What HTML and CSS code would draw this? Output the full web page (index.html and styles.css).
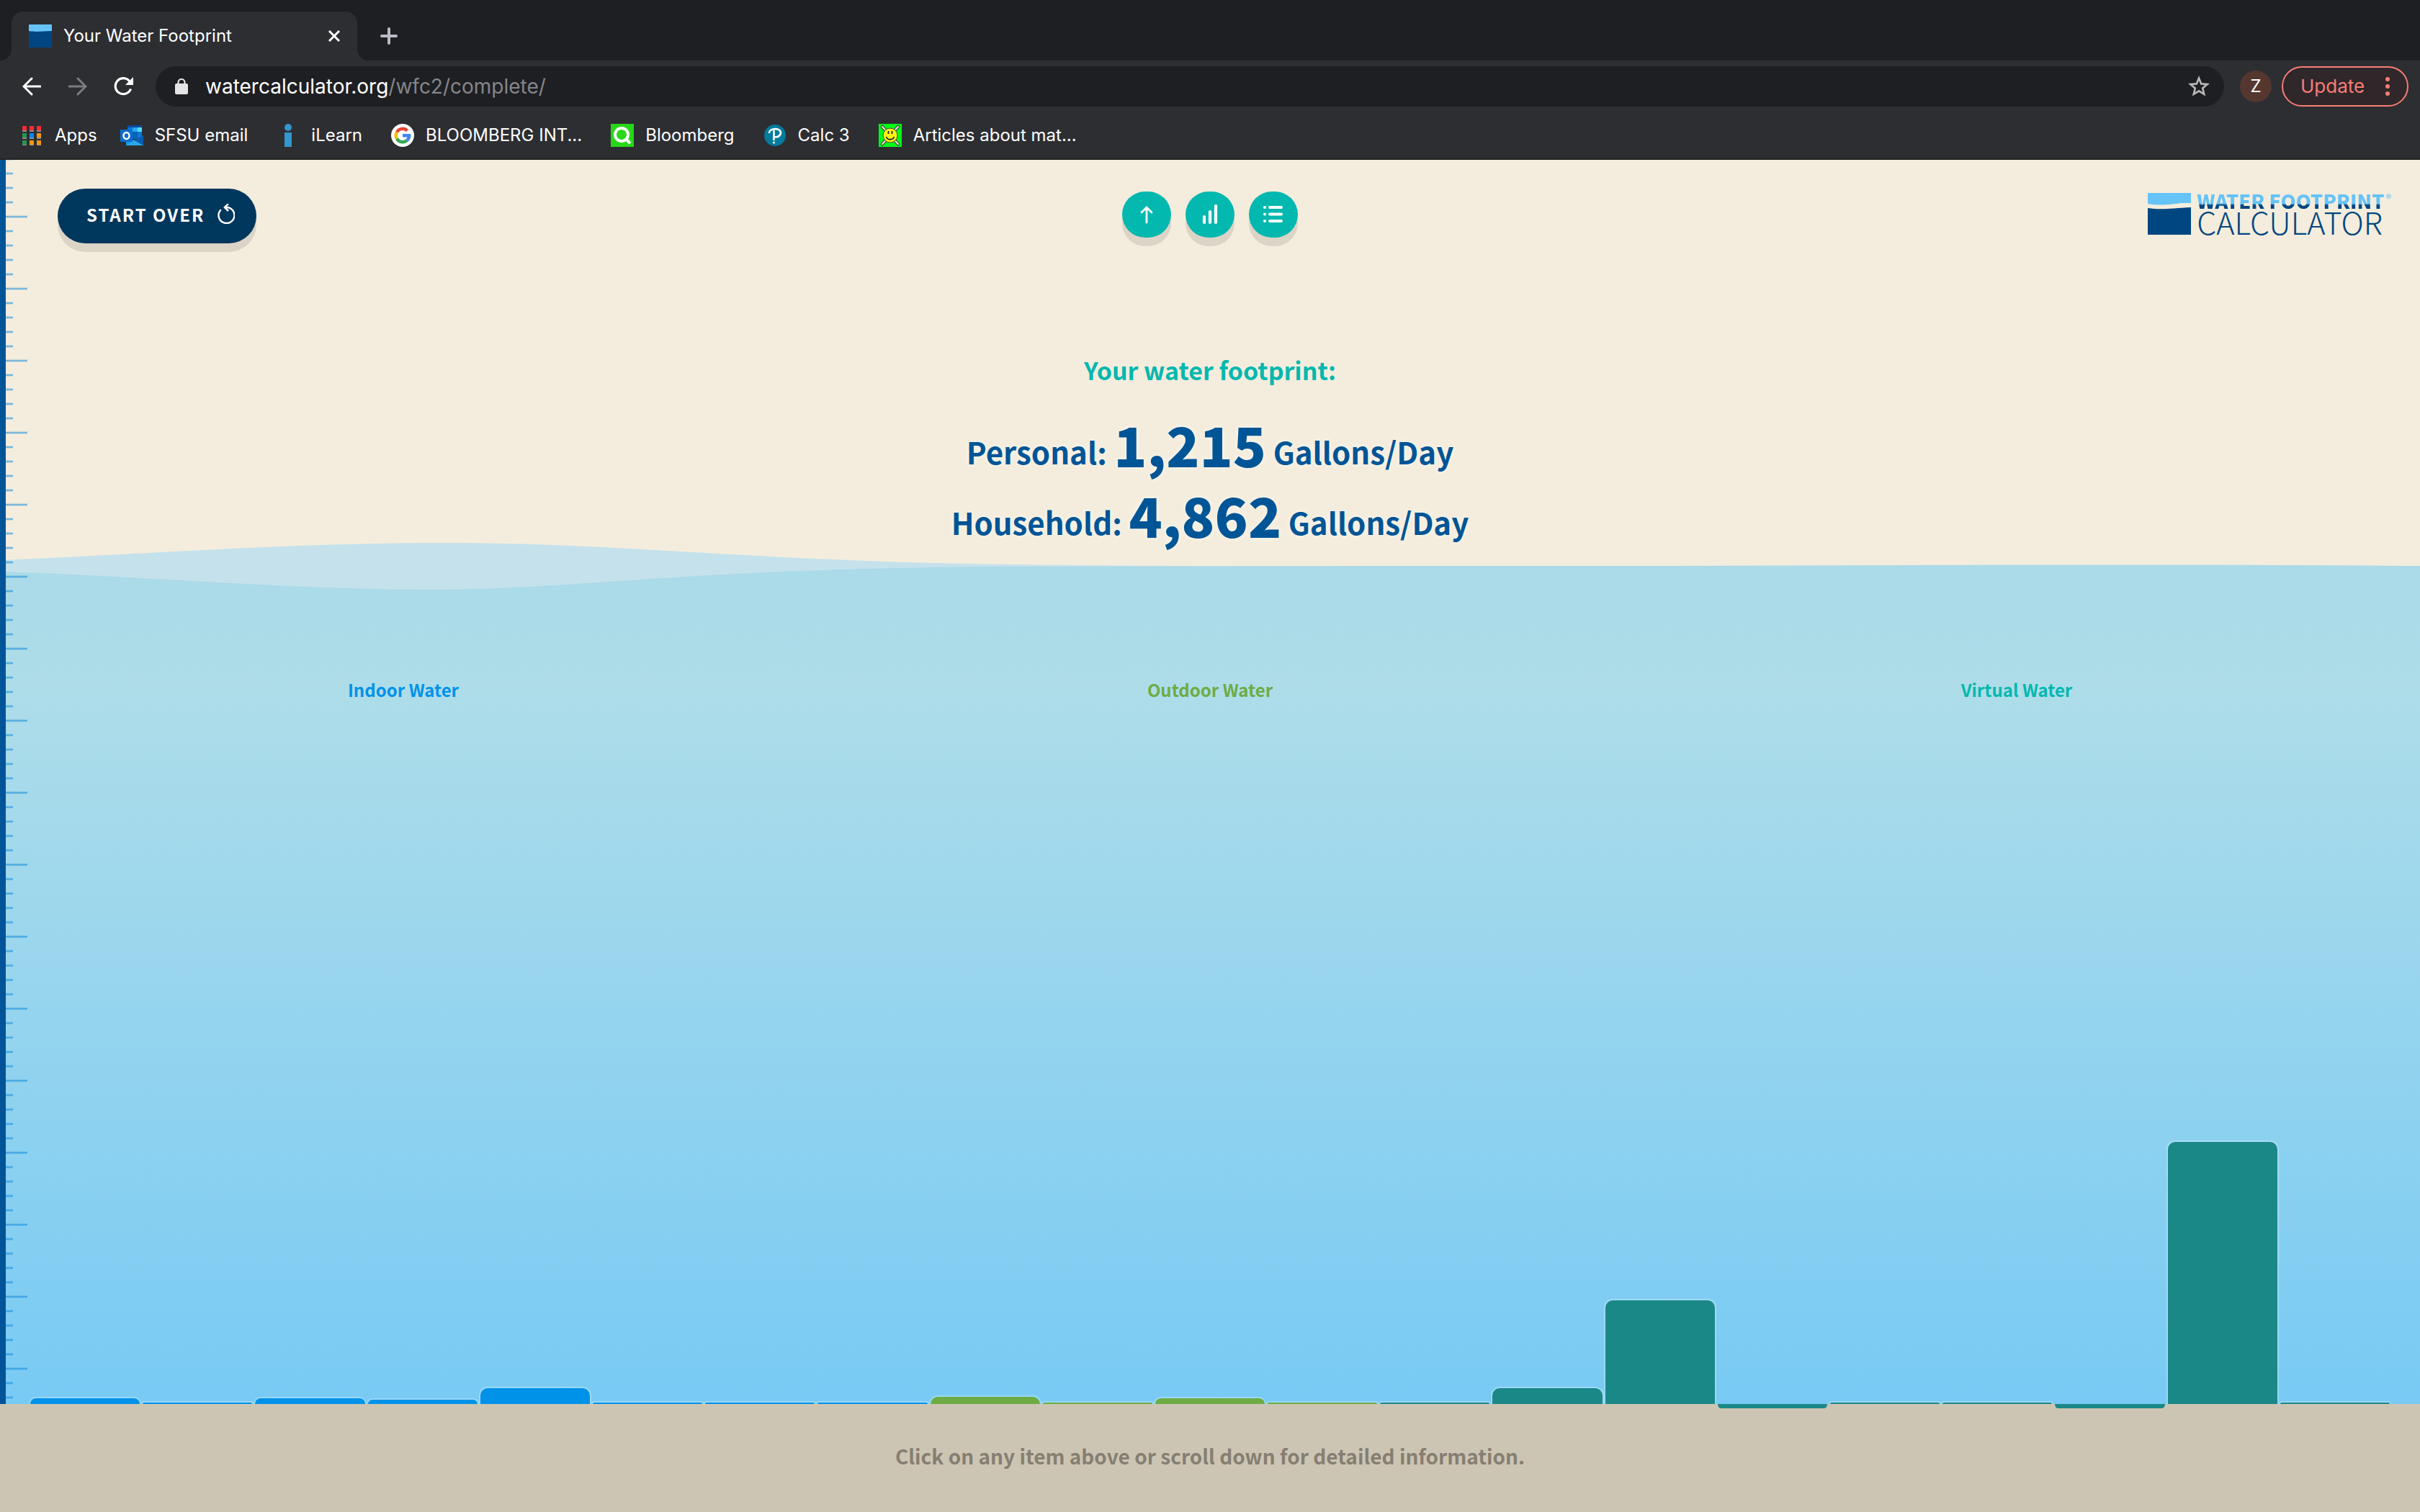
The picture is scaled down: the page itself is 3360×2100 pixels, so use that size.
FILE: index.html
```html
<!DOCTYPE html>
<html lang="en">
<head>
<meta charset="utf-8">
<title>Your Water Footprint</title>
<link rel="stylesheet" href="styles.css">
</head>
<body>
<header class="browser">
  <div class="tabstrip">
    <div class="tab">
      <svg class="favicon" viewBox="0 0 32 32"><path fill="#004680" d="M0 9h32v23H0z"/><path fill="#66c3f8" d="M0 0h32v9c-12 0-20 2-32 0z"/></svg>
      <span class="tab-title">Your Water Footprint</span>
      <button class="icon-btn" aria-label="Close tab"><svg width="16" height="16" viewBox="0 0 16 16"><path d="M1 1l14 14M15 1L1 15" stroke="#fff" stroke-width="3"/></svg></button>
    </div>
    <button class="icon-btn new-tab" aria-label="New tab"><svg width="24" height="24" viewBox="0 0 24 24"><path d="M12 2v20M2 12h20" stroke="#b8bcc4" stroke-width="4" stroke-linecap="round"/></svg></button>
  </div>
  <div class="toolbar">
    <button class="icon-btn nav" aria-label="Back"><svg width="26" height="26" viewBox="0 0 26 26"><path d="M25 13H3M13 2L2 13l11 11" fill="none" stroke="#fff" stroke-width="3" stroke-linecap="round"/></svg></button>
    <button class="icon-btn nav" aria-label="Forward"><svg width="26" height="26" viewBox="0 0 26 26"><path d="M1 13h22M13 2l11 11-11 11" fill="none" stroke="#7c7d80" stroke-width="3" stroke-linecap="round"/></svg></button>
    <button class="icon-btn nav" aria-label="Reload"><svg width="28" height="28" viewBox="0 0 28 28"><path d="M23.500 17.500A11 11 0 1 1 22 7" fill="none" stroke="#fff" stroke-width="3.200"/><path d="M27 1v11H16z" fill="#fff"/></svg></button>
    <div class="omnibox">
      <svg width="18" height="22" viewBox="0 0 18 22"><rect y="7" width="18" height="15" rx="2" fill="#e4e4e5"/><path d="M4.500 8V5.500a4.500 4.500 0 0 1 9 0V8" fill="none" stroke="#e4e4e5" stroke-width="2.200"/></svg>
      <span class="url">watercalculator.org<span class="path">/wfc2/complete/</span></span>
      <button class="icon-btn" aria-label="Bookmark"><svg width="30" height="30" viewBox="0 0 30 30"><path d="M15 3.500l3.200 7.900 8.500.6-6.500 5.500 2 8.300L15 21.300l-7.200 4.500 2-8.300L3.300 12l8.500-.6z" fill="none" stroke="#bababc" stroke-width="2.600"/></svg></button>
    </div>
    <button class="avatar" aria-label="Profile">Z</button>
    <button class="update">Update<svg width="6" height="26" viewBox="0 0 6 26"><g fill="#f97d77"><circle cx="3" cy="3" r="3"/><circle cx="3" cy="13" r="3"/><circle cx="3" cy="23" r="3"/></g></svg></button>
  </div>
  <nav class="bookmarks">
    <a class="apps" href="#"><svg width="32" height="32" viewBox="0 0 32 32"><path fill="#8a8c90" d="M3 9h6v2H3zm10 0h6v2h-6zm10 0h6v2h-6zM3 19h6v2H3zm10 0h6v2h-6zm10 0h6v2h-6zM3 29h6v1H3zm10 0h6v1h-6zm10 0h6v1h-6z"/><path fill="#fe2a32" d="M3 3h6v6H3zm10 0h6v6h-6zm10 0h6v6h-6z"/><path fill="#24954a" d="M3 13h6v6H3zm0 10h6v6H3z"/><path fill="#0b84ff" d="M13 13h6v6h-6z"/><path fill="#f6960f" d="M23 13h6v6h-6zM13 23h6v6h-6zm10 0h6v6h-6z"/></svg>Apps</a>
    <a href="#"><svg width="32" height="32" viewBox="0 0 32 32"><path fill="#0a4a9c" d="M10 2h20v3H10z"/><path fill="#0078d4" d="M10 5h7v13h-7z"/><path fill="#28a8ea" d="M17 5h7v6h-7z"/><path fill="#50d9ff" d="M24 5h6v6h-6z"/><path fill="#0364b8" d="M17 11h7v10h-7z"/><path fill="#0f78d0" d="M24 11h6v9h-6z"/><path fill="#0a5cb0" d="M32 16v14L19 22.500z"/><path fill="#119be5" d="M8 17l24 13H8z"/><path fill="#28a8ea" d="M8 30l11-7.500L32 30z"/><rect y="8" width="17" height="17" rx="1" fill="#0f6cd0"/><ellipse cx="8.500" cy="16.500" rx="4" ry="4.500" fill="none" stroke="#fff" stroke-width="2.400"/></svg>SFSU email</a>
    <a href="#"><svg width="32" height="32" viewBox="0 0 32 32"><path fill="#3496cf" d="M11 12h10v20H11z"/><circle cx="16" cy="5" r="5" fill="#3496cf"/></svg>iLearn</a>
    <a href="#"><svg width="32" height="32" viewBox="0 0 32 32"><circle cx="16" cy="16" r="16" fill="#fff"/><g fill="none" stroke-width="4.400"><path stroke="#ea4335" d="M8 11.500A9.200 9.200 0 0 1 22.500 9.500"/><path stroke="#fbbc05" d="M8 20.600a9.200 9.200 0 0 1 0-9.200"/><path stroke="#34a853" d="M22 23a9.200 9.200 0 0 1-14-2.400"/><path stroke="#4285f4" d="M16 16.200h9.200a9.200 9.200 0 0 1-3.200 6.900"/></g></svg>BLOOMBERG INT...</a>
    <a href="#"><svg width="32" height="32" viewBox="0 0 32 32"><path fill="#28d71a" d="M0 0h32v32H0z"/><circle cx="15" cy="15" r="9" fill="none" stroke="#fff" stroke-width="4"/><path d="M20 20l7 7" stroke="#fff" stroke-width="4"/></svg>Bloomberg</a>
    <a href="#"><svg width="32" height="32" viewBox="0 0 32 32"><circle cx="16" cy="16" r="15" fill="#047a9c"/><path d="M8 12c1-6 15-7 16 0 0 5-5 7-9 6M14.500 10v12" fill="none" stroke="#fff" stroke-width="2.600" stroke-linecap="round"/><circle cx="14.500" cy="26" r="1.600" fill="#fff"/></svg>Calc 3</a>
    <a href="#"><svg width="32" height="32" viewBox="0 0 32 32"><path fill="#00ff18" d="M0 0h32v32H0z"/><path d="M5 4l22 24M27 4L5 28" stroke="#333" stroke-width="4.500" stroke-linecap="round"/><path d="M5 4l22 24M27 4L5 28" stroke="#f3d7c8" stroke-width="2.500" stroke-linecap="round"/><circle cx="16" cy="16" r="10" fill="#fdf410" stroke="#444"/><path d="M13.500 10v4M18.500 10v4M10.500 18c2 5 9 5 11 0" fill="none" stroke="#222" stroke-width="1.800"/></svg>Articles about mat...</a>
  </nav>
</header>
<main class="page">
  <div class="ruler"></div>
  <section class="sky">
    <div class="topbar">
      <div><button class="start">START OVER<svg width="24" height="28" viewBox="0 0 24 28"><path d="M4 9a11 11 0 1 0 8-4" fill="none" stroke="#fff" stroke-width="2.400" stroke-linecap="round"/><path d="M15 0l-5 5 5 5" fill="none" stroke="#fff" stroke-width="2.600"/></svg></button></div>
      <div class="rounds">
        <button class="round" aria-label="Back to top"><svg width="36" height="28" viewBox="0 0 36 28"><path d="M18 25V4M11 11l7-7 7 7" fill="none" stroke="#fff" stroke-width="2.800" stroke-linecap="round" stroke-linejoin="round"/></svg></button>
        <button class="round" aria-label="Chart"><svg width="36" height="28" viewBox="0 0 36 28"><path d="M10 17v8M18 10v15M26 2v23" stroke="#fff" stroke-width="4.200" stroke-linecap="round"/></svg></button>
        <button class="round" aria-label="List"><svg width="36" height="28" viewBox="0 0 36 28"><path d="M13 4h16M13 13.500h16M13 23h16" stroke="#fff" stroke-width="4" stroke-linecap="round"/><g fill="#fff"><circle cx="6" cy="4" r="2"/><circle cx="6" cy="13.500" r="2"/><circle cx="6" cy="23" r="2"/></g></svg></button>
      </div>
      <a class="logo" href="#">
        <svg width="60" height="58" viewBox="0 0 60 58"><path fill="#66c3f8" d="M0 0h60v14H46C34 16 15 18 0 15z"/><path fill="#004680" d="M0 21c20 3 34 0 60-1v38H0z"/></svg>
        <span class="logo-text"><span class="logo-top"><span class="logo-name">WATER FOOTPRINT</span><span class="mark">®</span></span><span class="logo-bottom">CALCULATOR</span></span>
      </a>
    </div>
    <div class="totals">
      <h1>Your water footprint:</h1>
      <p class="total">Personal: <strong>1,215</strong> Gallons/Day</p>
      <p class="total">Household: <strong>4,862</strong> Gallons/Day</p>
    </div>
  </section>
  <section class="water">
    <svg class="waves" viewBox="0 0 3360 68" preserveAspectRatio="none"><path fill="#c5e1ec" d="M0 26C200 18 400 2 620 2S1000 22 1300 30C1500 35 1900 35 2300 34S2900 31 3360 34V68H0z"/><path fill="#abdae8" d="M0 42C200 48 400 67 600 67S950 37 1400 35C1700 34 2000 34 2300 34S2900 31 3360 34V68H0z"/></svg>
    <div class="labels"><h2 class="indoor">Indoor Water</h2><h2 class="outdoor">Outdoor Water</h2><h2 class="virtual">Virtual Water</h2></div>
    <div class="chart">
      <button class="bar indoor" style="height:10px" aria-label="Indoor 1"></button>
      <button class="bar indoor" style="height:4px" aria-label="Indoor 2"></button>
      <button class="bar indoor" style="height:10px" aria-label="Indoor 3"></button>
      <button class="bar indoor" style="height:8px" aria-label="Indoor 4"></button>
      <button class="bar indoor" style="height:24px" aria-label="Indoor 5"></button>
      <button class="bar indoor" style="height:4px" aria-label="Indoor 6"></button>
      <button class="bar indoor" style="height:4px" aria-label="Indoor 7"></button>
      <button class="bar indoor" style="height:4px" aria-label="Indoor 8"></button>
      <button class="bar outdoor" style="height:12px" aria-label="Outdoor 1"></button>
      <button class="bar outdoor" style="height:4px" aria-label="Outdoor 2"></button>
      <button class="bar outdoor" style="height:10px" aria-label="Outdoor 3"></button>
      <button class="bar outdoor" style="height:4px" aria-label="Outdoor 4"></button>
      <button class="bar virtual" style="height:4px" aria-label="Virtual 1"></button>
      <button class="bar virtual" style="height:24px" aria-label="Virtual 2"></button>
      <button class="bar virtual" style="height:146px" aria-label="Virtual 3"></button>
      <button class="bar virtual below" style="height:6px" aria-label="Virtual 4"></button>
      <button class="bar virtual" style="height:4px" aria-label="Virtual 5"></button>
      <button class="bar virtual" style="height:4px" aria-label="Virtual 6"></button>
      <button class="bar virtual below" style="height:6px" aria-label="Virtual 7"></button>
      <button class="bar virtual" style="height:366px" aria-label="Virtual 8"></button>
      <button class="bar virtual" style="height:4px" aria-label="Virtual 9"></button>
    </div>
  </section>
  <footer class="ground"><p>Click on any item above or scroll down for detailed information.</p></footer>
</main>
</body>
</html>
```

FILE: styles.css
```css
* { box-sizing: border-box; }

body {
  margin: 0;
  min-height: 100vh;
  display: flex;
  flex-direction: column;
  font-family: "Noto Sans CJK SC", sans-serif;
  background: #f4eddd;
}

h1, h2, p { margin: 0; }
button { margin: 0; padding: 0; border: 0; font: inherit; cursor: pointer; }
svg { display: block; flex: none; }
a { color: inherit; text-decoration: none; }

/* Browser chrome */
.browser {
  font-family: Inter, sans-serif;
  font-size: 24px;
  line-height: 32px;
  color: #fff;
  background: #2d2e32;
  border-bottom: 2px solid #242422;
}
.icon-btn { background: none; display: flex; }

.tabstrip {
  height: 84px;
  padding: 16px 16px 0;
  display: flex;
  background: #1e1f22;
}
.tab {
  position: relative;
  width: 480px;
  padding: 0 24px;
  display: flex;
  align-items: center;
  gap: 16px;
  background: #2d2e32;
  border-radius: 16px 16px 0 0;
}
/* flared feet of the active tab */
.tab::before, .tab::after {
  content: "";
  position: absolute;
  bottom: 0;
  width: 16px;
  height: 16px;
}
.tab::before { right: 100%; background: radial-gradient(circle at 0 0, #1e1f22 16px, #2d2e32 16px); }
.tab::after { left: 100%; background: radial-gradient(circle at 100% 0, #1e1f22 16px, #2d2e32 16px); }
.favicon { width: 32px; height: 32px; }
.tab-title { flex: 1; }
.new-tab { align-self: center; margin-left: 32px; }

.toolbar {
  padding: 8px 16px;
  display: flex;
  align-items: center;
}
.nav { width: 56px; margin-right: 8px; justify-content: center; }
.omnibox {
  flex: 1;
  height: 56px;
  margin-left: 8px;
  padding: 0 20px 0 27px;
  display: flex;
  align-items: center;
  gap: 24px;
  background: #1e1f22;
  border-radius: 28px;
}
.url { flex: 1; font-size: 28px; }
.path { color: #85868a; }
.avatar {
  width: 44px;
  height: 44px;
  margin: 0 14px 0 22px;
  border-radius: 50%;
  background: #553730;
  color: #fff;
}
.update {
  width: 176px;
  height: 56px;
  padding: 0 24px;
  display: flex;
  align-items: center;
  justify-content: space-between;
  border: 2px solid #f97d77;
  border-radius: 28px;
  background: #2f272a;
  color: #f97d77;
  font-size: 26px;
}

.bookmarks {
  height: 64px;
  padding: 0 28px;
  display: flex;
  align-items: center;
}
.bookmarks a { display: flex; align-items: center; gap: 16px; margin-right: 40px; }
.bookmarks .apps { margin-right: 32px; }

/* Page */
.page {
  position: relative;
  flex: 1;
  display: flex;
  flex-direction: column;
}
.ruler {
  --tick: linear-gradient(rgba(13, 136, 215, .2) 1px, rgba(13, 136, 215, .52) 1px 3px, rgba(13, 136, 215, .2) 3px 4px, transparent 4px);
  position: absolute;
  inset: 0 auto 150px 0;
  width: 38px;
  z-index: 2;
  background:
    linear-gradient(#005497, #005497) 0 0 / 8px 100% no-repeat,
    var(--tick) 8px 77px / 30px 100px repeat-y,
    var(--tick) 8px 97px / 10px 100px repeat-y,
    var(--tick) 8px 17px / 10px 100px repeat-y,
    var(--tick) 8px 37px / 10px 100px repeat-y,
    var(--tick) 8px 57px / 10px 100px repeat-y;
}

.topbar {
  padding: 40px 40px 0 80px;
  display: grid;
  grid-template-columns: 1fr auto 1fr;
  align-items: start;
}
.start {
  height: 76px;
  padding: 0 30px 6px 40px;
  display: flex;
  align-items: center;
  gap: 18px;
  border-radius: 38px;
  background: #00375d;
  box-shadow: 0 12px rgba(50, 30, 30, .12);
  color: #fff;
  font-size: 24px;
  font-weight: 700;
  letter-spacing: 2px;
}
.rounds { display: flex; gap: 20px; margin: 4px 40px 0 0; }
.round {
  width: 68px;
  height: 64px;
  display: grid;
  place-items: center;
  border-radius: 32px;
  background: #03b8af;
  box-shadow: 0 12px rgba(50, 30, 30, .12);
}
.logo { justify-self: end; margin-top: 6px; display: flex; gap: 8px; }
.logo-text { display: flex; flex-direction: column; }
.logo-top { display: flex; gap: 2px; height: 22px; }
.logo-name {
  line-height: 22px;
  font-size: 27px;
  font-weight: 900;
  color: transparent;
  background: linear-gradient(#66c3f8 68%, #004680 76%);
  background-clip: text;
}
.mark { font-size: 16px; line-height: 14px; color: #66c3f8; }
.logo-bottom { line-height: 34px; font-size: 43px; font-weight: 300; color: #004680; }

.totals {
  position: relative;
  z-index: 1;
  padding-top: 146px;
  text-align: center;
  color: #005596;
}
.totals h1 { font-size: 34px; line-height: 60px; color: #03b8af; margin-bottom: 34px; }
.total {
  font-size: 42px;
  line-height: 98px;
  font-weight: 700;
  text-shadow: 0 0 8px rgba(255, 255, 255, .6);
}
.total strong { font-size: 76px; line-height: 76px; font-weight: 900; vertical-align: -4px; }

.water {
  flex: 1;
  margin-top: -22px;
  display: flex;
  flex-direction: column;
  background: linear-gradient(transparent 67px, #abdae8 67px, #aedde9 200px, #78caf4);
}
.waves { width: 100%; height: 68px; }
.labels {
  padding-top: 118px;
  display: grid;
  grid-template-columns: repeat(3, 1fr);
  text-align: center;
}
.labels h2 { font-size: 24px; line-height: 40px; color: var(--tone); }
.indoor { --tone: #0092e9; }
.outdoor { --tone: #6dac45; }
.virtual { --tone: #03b8af; }

.chart {
  flex: 1;
  padding: 0 40px;
  display: grid;
  grid-template-columns: repeat(21, 1fr);
  align-items: end;
}
.bar {
  border: 2px solid rgba(255, 255, 255, .25);
  border-bottom: 0;
  border-radius: 12px 12px 0 0;
  background: var(--tone) padding-box;
}
.bar.virtual { --tone: #1b8888; }
.bar.below {
  margin-bottom: -6px;
  border-width: 0 2px;
  border-color: transparent;
  border-radius: 0 0 12px 12px;
  z-index: 1;
}

.ground {
  height: 150px;
  padding-top: 52px;
  background: #cdc5b3;
  text-align: center;
  font-size: 28px;
  line-height: 40px;
  font-weight: 700;
  color: #857f72;
}
```
